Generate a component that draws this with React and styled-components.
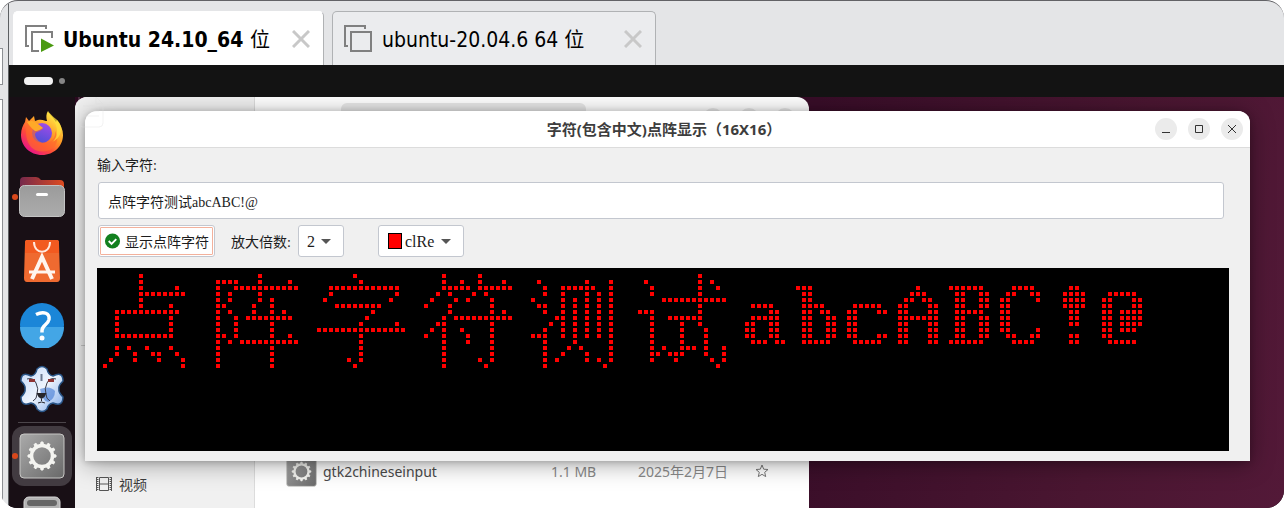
import React from "react";
import styled, { createGlobalStyle, css } from "styled-components";

const GlobalStyle = createGlobalStyle`
  * { box-sizing: border-box; }
  html, body { margin: 0; background: #fff; }
  button, input, select { margin: 0; font: inherit; color: inherit; }
`;

const uiFont = `"Noto Sans", "Noto Sans CJK SC", sans-serif`;
const tabFont = `"DejaVu Sans Condensed", "Noto Sans CJK SC", sans-serif`;
const formFont = `"Liberation Serif", "Noto Sans CJK SC", serif`;

const Screen = styled.div`
  display: flex;
  min-height: 100vh;
  overflow: hidden;
  border-radius: 18px;
  background: #e4e5e7;
  border-top: 1px solid #626266;
`;

const Edge = styled.div`
  display: flex;
  flex-direction: column;
  gap: 14px;
  width: 9px;
  padding-top: 47px;
  border-right: 1px solid #5d6063;
  flex: none;
`;

const EdgePane = styled.div`
  width: 3px;
  height: ${(p) => (p.$tall ? "auto" : "37px")};
  flex: ${(p) => (p.$tall ? "1" : "none")};
  background: #fff;
  border: 1px solid #8d9094;
  border-left: 0;
`;

const Machine = styled.main`
  display: flex;
  flex-direction: column;
  flex: 1;
  min-width: 0;
`;

const TabBar = styled.nav`
  display: flex;
  gap: 8px;
  padding: 10px 4px 0;
`;

const Tab = styled.div`
  display: flex;
  align-items: center;
  width: ${(p) => (p.$active ? 311 : 324)}px;
  height: 54px;
  padding: 0 13px 0 10px;
  border: 1px solid ${(p) => (p.$active ? "#fff" : "#b0b2b4")};
  border-right-color: #b0b2b4;
  border-bottom: 0;
  border-radius: 5px 5px 0 0;
  background: ${(p) => (p.$active ? "#fff" : "#ebecee")};
`;

const TabLabel = styled.button`
  display: flex;
  align-items: center;
  gap: 8px;
  flex: 1;
  padding: 0;
  border: 0;
  background: none;
  color: #000;
  font-family: ${tabFont};
  font-size: 21px;
  font-weight: ${(p) => (p.$active ? 700 : 400)};
  white-space: nowrap;
`;

const Hanzi = styled.span`
  font-weight: 400;
  font-size: 20px;
`;

const CloseTab = styled.button`
  display: grid;
  width: 18px;
  height: 18px;
  padding: 0;
  border: 0;
  background: none;
`;

const TopBar = styled.header`
  display: flex;
  align-items: center;
  gap: 6px;
  height: 32px;
  padding-left: 15px;
  background: #131313;
`;

const Pill = styled.span`
  width: ${(p) => (p.$current ? 29 : 6)}px;
  height: ${(p) => (p.$current ? 8 : 6)}px;
  border-radius: 4px;
  background: ${(p) => (p.$current ? "#f2f2f2" : "#858585")};
`;

const Desktop = styled.div`
  display: flex;
  flex: 1;
  background: #180f15;
`;

const Dock = styled.aside`
  display: flex;
  flex-direction: column;
  align-items: center;
  width: 66px;
  height: 411px;
  padding-top: 4px;
  overflow: hidden;
  flex: none;
  background: #180f15;
`;

const DockItem = styled.button`
  display: grid;
  place-items: center;
  position: relative;
  flex: none;
  width: 60px;
  height: ${(p) => (p.$active ? 60 : 64)}px;
  padding: 0;
  border: 0;
  border-radius: 12px;
  background: ${(p) => (p.$active ? "#423b41" : "none")};
  ${(p) =>
    p.$running &&
    css`
      &::before {
        content: "";
        position: absolute;
        left: 0;
        width: 6px;
        height: 6px;
        border-radius: 50%;
        background: #d9481c;
      }
    `}
`;

const DockRule = styled.hr`
  flex: none;
  width: 48px;
  height: 1px;
  margin: 1px 0 3px;
  border: 0;
  background: #4b454a;
`;

const Workspace = styled.section`
  position: relative;
  flex: 1;
  min-width: 0;
  overflow: hidden;
  background: linear-gradient(100deg, #2c0a20 0%, #380d28 58%, #4a1631 84%, #531938 100%);
`;

const FilesWindow = styled.section`
  display: flex;
  position: absolute;
  inset: 0 auto 0 0;
  width: 734px;
  overflow: hidden;
  border-radius: 12px 12px 0 0;
  background: #fff;
  font-family: ${uiFont};
  font-size: 14px;
  color: #3d3d3d;
`;

const Sidebar = styled.div`
  display: flex;
  flex-direction: column;
  width: 180px;
  padding: 248px 6px 0;
  background: #f0f0f0;
  border-right: 1px solid #dcdcdc;
`;

const SidebarRule = styled.hr`
  width: 100%;
  height: 1px;
  margin: 0;
  border: 0;
  background: #c9c9c9;
`;

const Place = styled.a`
  display: flex;
  align-items: center;
  gap: 7px;
  margin-top: 120px;
  padding-left: 15px;
  height: 36px;
  color: inherit;
  text-decoration: none;
`;

const FilesMain = styled.div`
  flex: 1;
`;

const FilesHeader = styled.div`
  display: flex;
  align-items: flex-start;
  justify-content: space-between;
  height: 46px;
  padding: 6px 14px 0 86px;
`;

const PathBar = styled.div`
  width: 245px;
  height: 34px;
  border-radius: 6px;
  background: #e8e8e8;
`;

const FilesControls = styled.div`
  display: flex;
  gap: 16px;
  padding-top: 5px;
`;

const ControlDot = styled.span`
  width: 20px;
  height: 20px;
  border-radius: 50%;
  background: #e8e8e8;
`;

const FileRow = styled.div`
  display: grid;
  grid-template-columns: 30px 235px 87px 117px 16px;
  align-items: center;
  height: 36px;
  margin-top: 310px;
  padding-left: 31px;
  color: #8a8a8a;
`;

const FileName = styled.span`
  padding-left: 7px;
  color: #4a4a4a;
`;

const FileMeta = styled.span`
  white-space: nowrap;
`;

const Ghost = styled.svg`
  position: absolute;
  left: 3px;
  top: 0;
  opacity: 0.35;
`;

const Dialog = styled.section`
  position: absolute;
  inset: 14px 34px auto 10px;
  border-radius: 12px 12px 0 0;
  background: #f0f0f0;
  box-shadow: 0 3px 24px rgba(0, 0, 0, 0.36), 0 1px 6px rgba(0, 0, 0, 0.2);
  font-family: ${formFont};
  font-size: 14px;
  color: #1c1c1c;
`;

const TitleBar = styled.header`
  display: grid;
  grid-template-columns: 1fr auto 1fr;
  align-items: center;
  height: 37px;
  padding-right: 7px;
  border-bottom: 1px solid #dcdcdc;
  border-radius: 12px 12px 0 0;
  background: #fff;
`;

const Title = styled.h1`
  grid-column: 2;
  margin: 0;
  font: 700 15px/20px ${uiFont};
  color: #3d3d3d;
  white-space: nowrap;
`;

const WindowControls = styled.div`
  display: flex;
  justify-content: flex-end;
  gap: 11px;
`;

const WindowButton = styled.button`
  display: grid;
  place-items: center;
  width: 22px;
  height: 22px;
  padding: 0;
  border: 0;
  border-radius: 50%;
  background: #ebebeb;
`;

const Form = styled.form`
  padding: 2px 21px 10px 12px;
`;

const FieldLabel = styled.label`
  display: block;
  line-height: 32px;
`;

const control = css`
  height: 32px;
  border: 1px solid #c3c7cf;
  border-radius: 3px;
  background: #fff;
`;

const TextInput = styled.input`
  ${control}
  display: block;
  width: calc(100% - 6px);
  height: 37px;
  margin: 0 5px 6px 1px;
  padding: 0 9px;
`;

const Controls = styled.div`
  display: flex;
  align-items: center;
  padding-left: 1px;
  margin-bottom: 11px;
`;

const ShowButton = styled.button`
  ${control}
  display: flex;
  align-items: center;
  gap: 4px;
  width: 117px;
  padding: 0 5px;
  outline: 1px solid #f3b19c;
  outline-offset: -3px;
  white-space: nowrap;
`;

const ZoomLabel = styled.label`
  width: 67px;
  margin-left: 16px;
`;

const Picker = styled.div`
  display: grid;
  position: relative;
  align-items: center;
  width: ${(p) => p.$width}px;
  margin-right: 34px;
`;

const Select = styled.select`
  ${control}
  width: 100%;
  padding: 0 0 0 ${(p) => (p.$swatch ? 26 : 8)}px;
  appearance: none;
  font-size: 16px;
`;

const Swatch = styled.span`
  position: absolute;
  left: 10px;
  width: 14px;
  height: 16px;
  border: 1px solid #000;
  background: #f00;
  pointer-events: none;
`;

const Arrow = styled.span`
  position: absolute;
  right: 13px;
  border: 5px solid transparent;
  border-top-color: #555;
  border-bottom: 0;
  pointer-events: none;
`;

const Matrix = styled.div`
  height: 183px;
  padding: 6px;
  overflow: hidden;
  background: #000;
`;

/* Lit columns of every row in a 16-row glyph; "a-b" is a run of dots. */
const glyphs = [
  { wide: true, rows: ["6", "6", "6 12", "6-13", "6", "6 11", "2-12", "2 11", "2 11", "2 11", "2-11", "", "2 4 7 11", "2 5 8 9 12", "1 5 9 13", "0 13"] },
  { wide: true, rows: ["8", "1-4 8 13", "1 4-14", "1 3 8", "1 3 8 10", "1 2 7 10", "1 3 7 10 12", "1 4 6-13", "1 4 10", "1 4 10", "1 2 4 10 13", "1 3 5-14", "1 10", "1 10", "1 10", "1 10"] },
  { wide: true, rows: ["6", "7", "2-13", "2 13", "1 12", "3-10", "9", "8", "7 13", "0-14", "7", "7", "7", "7", "5 7", "6"] },
  { wide: true, rows: ["3 9", "3 6 9 13", "3-7 9-14", "2 4 8 10", "1 5 7 11", "0 4 11", "4 11 13", "3 5-14", "2 3 11", "1 3 6 11", "0 3 7 11", "3 7 11", "3 11", "3 11", "3 9 11", "3 10"] },
  { wide: true, rows: ["", "1 9 13", "2 5-10 13", "2 5 9 11 13", "0 5 7 9 11 13", "1 2 5 7 9 11 13", "2 5 7 9 11 13", "4 5 7 9 11 13", "3 5 7 9 11 13", "2 5 7 9 11 13", "0-2 5 7 9 11 13", "2 7 13", "2 6 8 13", "2 5 9 13", "2 4 9 11 13", "2 12"] },
  { wide: true, rows: ["10", "1 10 12", "2 10 13", "2 10", "4-14", "10", "0-2 10", "2 5-10", "2 7 10", "2 7 11", "2 7 11", "2 7 11", "2 4 7-9 11 14", "2 3 5-7 11 14", "2 6 12 14", "13"] },
  { rows: ["", "", "", "", "", "1-4", "4 5", "1-5", "0 1 4 5", "0 1 4 5", "0 1 4 5", "1-3 5 6"] },
  { rows: ["", "", "0-2", "1 2", "1 2", "1-4", "1 2 4 5", "1 2 5 6", "1 2 5 6", "1 2 5 6", "1 2 5 6", "1-5"] },
  { rows: ["", "", "", "", "", "1-5", "0 1 5 6", "0 1", "0 1", "0 1", "0 1 5 6", "1-5"] },
  { rows: ["", "", "3", "2-4", "1 2 4 5", "0 1 5 6", "0 1 5 6", "0-6", "0 1 5 6", "0 1 5 6", "0 1 5 6", "0 1 5 6"] },
  { rows: ["", "", "0-5", "1 2 5 6", "1 2 5 6", "1 2 5 6", "1-5", "1 2 5 6", "1 2 5 6", "1 2 5 6", "1 2 5 6", "0-5"] },
  { rows: ["", "", "2-5", "1 2 5 6", "0 1 6", "0 1", "0 1", "0 1", "0 1", "0 1 6", "1 2 5 6", "2-5"] },
  { rows: ["", "", "3 4", "2-5", "2-5", "2-5", "3 4", "3 4", "3 4", "", "3 4", "3 4"] },
  { rows: ["", "", "", "1-5", "0 1 5 6", "0 1 5 6", "0 1 3-6", "0 1 3-6", "0 1 3-6", "0 1 3-5", "0 1", "1-5"] },
];

const litColumns = (row) =>
  row
    .split(" ")
    .filter(Boolean)
    .flatMap((part) => {
      const [from, to = from] = part.split("-").map(Number);
      return Array.from({ length: to - from + 1 }, (_, i) => from + i);
    });

function DotMatrix() {
  let origin = 0;
  const dots = [];
  glyphs.forEach((glyph, g) => {
    glyph.rows.forEach((row, r) =>
      litColumns(row).forEach((c) =>
        dots.push(<rect key={`${g}-${r}-${c}`} x={origin + c * 6} y={r * 6} width="4" height="4" />)
      )
    );
    origin += glyph.wide ? 107 : 51;
  });
  return (
    <Matrix>
      <svg width="1050" height="100" fill="#f00" shapeRendering="crispEdges" role="img" aria-label="点阵">
        {dots}
      </svg>
    </Matrix>
  );
}

const MachineIcon = ({ running }) => (
  <svg width="31" height="29" fill="none" stroke="#808080" strokeWidth="2">
    <path d="M22 5V2H2v20h3" />
    {running ? <path d="M15 27H8V8h20v6" /> : <path d="M8 8h20v19H8z" />}
    {running && <path d="M17 14.500L30 21.500L17 28z" fill="#4a9a10" stroke="none" />}
  </svg>
);

const Cross = () => (
  <svg width="18" height="18" stroke="#c8c8c8" strokeWidth="3">
    <path d="M1 1l16 16M17 1L1 17" />
  </svg>
);

const Firefox = () => (
  <svg width="44" height="44" viewBox="0 0 44 44">
    <defs>
      <linearGradient id="fox" x1=".85" y1=".1" x2=".2" y2=".95">
        <stop offset="0" stopColor="#fff04a" />
        <stop offset=".4" stopColor="#ff9a25" />
        <stop offset=".7" stopColor="#ff4a39" />
        <stop offset="1" stopColor="#e8128c" />
      </linearGradient>
      <linearGradient id="globe" x1=".7" y1="0" x2=".3" y2="1">
        <stop offset="0" stopColor="#a14be8" />
        <stop offset="1" stopColor="#4b4fd6" />
      </linearGradient>
    </defs>
    <path d="M28 0c1 3 5 6 8 11l1-2c4 5 6 10 6 15 0 11-9 20-21 20S1 35 1 24c0-6 2-10 4-13l1-5 3 4 5-5 1 5c6-3 10 0 12 0-1-4-1-7 1-10z" fill="url(#fox)" />
    <circle cx="22" cy="22" r="10" fill="url(#globe)" />
    <path d="M7 12c4-2 8-2 11 1l5 4c-2 4-7 3-8 6 0 5 5 9 10 9 7 0 11-6 10-12 3 5 3 12-1 16-6 6-17 6-23 0-5-6-6-15-4-24z" fill="#ff6a2b" opacity=".65" />
    <path d="M7 11c4-2 9-1 11 2l5 4c-3 1-4 3-8 3-4-3-6-6-8-9z" fill="#ffa928" />
    <path d="M28 0c1 5 9 10 9 20 0 5-2 9-5 11 8-3 11-12 8-18-2-5-8-7-12-13z" fill="#ffdf3c" opacity=".75" />
  </svg>
);

const Folder = () => (
  <svg width="46" height="42" viewBox="0 0 46 42">
    <defs>
      <linearGradient id="tab" x1="0" x2="1">
        <stop offset="0" stopColor="#76294c" />
        <stop offset="1" stopColor="#de4b20" />
      </linearGradient>
      <linearGradient id="steel" x1="0" y1="0" x2="0" y2="1">
        <stop offset="0" stopColor="#9b9b9b" />
        <stop offset="1" stopColor="#acacac" />
      </linearGradient>
    </defs>
    <path d="M1 14V5q0-4 4-4h12q3 0 5 3h19q4 0 4 4v12H1z" fill="url(#tab)" />
    <rect x=".5" y="9.500" width="45" height="31" rx="5" fill="url(#steel)" stroke="#c3c3c3" />
    <rect x="17" y="17" width="12" height="3" rx="1.500" fill="#fff" />
  </svg>
);

const Software = () => (
  <svg width="38" height="44" viewBox="0 0 38 44" fill="none">
    <path d="M4 1h30q2 0 2 3l1 35q0 4-3 4H4q-3 0-3-4L2 4q0-3 2-3z" fill="#ef6a30" />
    <path d="M4 1h30q2 0 2 3v10H2V4q0-3 2-3z" fill="#f25a20" />
    <path d="M11 3c0 13 16 13 16 0" stroke="#ffe9df" strokeWidth="2" />
    <path d="M9 40l10-22 10 22" stroke="#fff5ef" strokeWidth="4" />
    <path d="M6 33h26" stroke="#fff5ef" strokeWidth="3" />
  </svg>
);

const Help = () => (
  <svg width="46" height="46" viewBox="0 0 46 46" fill="none">
    <circle cx="23" cy="23" r="22" fill="#1b86d8" />
    <path d="M1 25a22 22 0 0 0 44 0z" fill="#43a6e6" />
    <path d="M17 12.500c8-4 14-1 13 5-1 5-7 6-7 11v2" stroke="#fff" strokeWidth="3.500" />
    <circle cx="23" cy="36" r="2.500" fill="#fff" />
  </svg>
);

const Lazarus = () => (
  <svg width="46" height="48" viewBox="0 0 46 48" fill="none">
    <defs>
      <linearGradient id="ice" x1="0" y1="0" x2="1" y2="1">
        <stop offset="0" stopColor="#c3d8f8" />
        <stop offset=".5" stopColor="#eef4fd" />
        <stop offset="1" stopColor="#7da8e8" />
      </linearGradient>
    </defs>
    <path d="M18 4q5-5 10 0 1 6 6 7 10-5 10 5-5 5-4 8-1 3 4 8 0 10-10 6-5 1-6 6-5 5-10 0-1-5-6-6-10 4-10-6 5-5 4-8 1-3-4-8 0-10 10-5 5-1 6-7z" fill="url(#ice)" stroke="#2a5587" strokeWidth="1.500" />
    <path d="M21 24q10-4 15 2 0 8-7 11-6-1-8-13z" fill="#3f78d4" opacity=".6" />
    <path d="M8 14q6-2 9 4 3 6 1 11 0 5-4 7" stroke="#3a3e4c" />
    <path d="M37 14q-6-2-9 4-3 6-1 11 0 5 4 7" stroke="#3a3e4c" />
    <path d="M22.500 9v7" stroke="#6d7a92" strokeWidth="2" />
    <path d="M10 15.500h6M29 15.500h6" stroke="#8e3434" strokeWidth="3" />
    <path d="M17.500 28h10l-2 4-3 2-3-2z" fill="#26262b" />
    <path d="M22.500 34v2M19 38q3.500-2 7 0" stroke="#26262b" />
  </svg>
);

const teeth = Array.from({ length: 12 }, (_, i) => i * 30);

const GearTile = ({ size }) => (
  <svg width={size} height={size} viewBox="0 0 46 46" fill="none">
    <defs>
      <linearGradient id={`tile${size}`} x1="0" y1="0" x2="1" y2="1">
        <stop offset="0" stopColor="#aaa" />
        <stop offset="1" stopColor="#696969" />
      </linearGradient>
    </defs>
    <rect x="1" y="1" width="44" height="44" rx="4" fill={`url(#tile${size})`} stroke="#c6c6c4" />
    <circle cx="23" cy="23" r="10.500" stroke="#f4f4f0" strokeWidth="3.500" />
    {teeth.map((a) => (
      <path key={a} d="M21.500 12l.5-3h2l.5 3z" fill="#f4f4f0" stroke="#f4f4f0" transform={`rotate(${a} 23 23)`} />
    ))}
  </svg>
);

const Drive = () => (
  <svg width="38" height="44" viewBox="0 0 38 44" fill="none">
    <rect x="1" y="1" width="36" height="42" rx="5" fill="#b3b3b3" stroke="#d5d5d5" />
    <rect x="4" y="4" width="30" height="6" rx="3" fill="#666" />
  </svg>
);

const Film = () => (
  <svg width="16" height="14" stroke="#555" fill="none">
    <path d="M3.500 .5h9v13h-9zM3.500 7h9" />
    <path d="M1.500 0v14M14.500 0v14" strokeWidth="2" strokeDasharray="1 1" />
    <path d="M.5 0v14M15.500 0v14" />
  </svg>
);

const Star = () => (
  <svg width="14" height="14" viewBox="0 0 14 14" fill="none" stroke="#777">
    <path d="M7 1l1.700 4.200 4.300.3-3.300 2.800 1 4.300L7 10.300l-3.700 2.300 1-4.300L1 5.500l4.300-.3z" />
  </svg>
);

const Check = () => (
  <svg width="18" height="18" viewBox="0 0 18 18" fill="none">
    <circle cx="9" cy="9" r="8" fill="#12801f" />
    <path d="M5 9l3 3 5-5" stroke="#fff" strokeWidth="2" />
  </svg>
);

const controlShapes = {
  最小化: "M1 8.500h8",
  最大化: "M1.500 1.500h7v7h-7z",
  关闭: "M1 1l8 8M9 1L1 9",
};

export default function App() {
  return (
    <>
      <GlobalStyle />
      <Screen>
        <Edge>
          <EdgePane />
          <EdgePane $tall />
        </Edge>
        <Machine>
          <TabBar>
            <Tab $active>
              <TabLabel type="button" $active>
                <MachineIcon running />
                <span>Ubuntu 24.10_64 <Hanzi>位</Hanzi></span>
              </TabLabel>
              <CloseTab type="button" aria-label="关闭"><Cross /></CloseTab>
            </Tab>
            <Tab>
              <TabLabel type="button">
                <MachineIcon />
                <span>ubuntu-20.04.6 64 <Hanzi>位</Hanzi></span>
              </TabLabel>
              <CloseTab type="button" aria-label="关闭"><Cross /></CloseTab>
            </Tab>
          </TabBar>
          <TopBar>
            <Pill $current />
            <Pill />
          </TopBar>
          <Desktop>
            <Dock>
              <DockItem type="button" aria-label="Firefox"><Firefox /></DockItem>
              <DockItem type="button" $running aria-label="文件"><Folder /></DockItem>
              <DockItem type="button" aria-label="软件"><Software /></DockItem>
              <DockItem type="button" aria-label="帮助"><Help /></DockItem>
              <DockItem type="button" aria-label="Lazarus"><Lazarus /></DockItem>
              <DockRule />
              <DockItem type="button" $active $running aria-label="应用"><GearTile size={46} /></DockItem>
              <DockItem type="button" aria-label="磁盘"><Drive /></DockItem>
            </Dock>
            <Workspace>
              <FilesWindow>
                <Sidebar>
                  <SidebarRule />
                  <Place href="#videos"><Film />视频</Place>
                </Sidebar>
                <FilesMain>
                  <FilesHeader>
                    <PathBar />
                    <FilesControls>
                      <ControlDot />
                      <ControlDot />
                      <ControlDot />
                    </FilesControls>
                  </FilesHeader>
                  <FileRow>
                    <GearTile size={31} />
                    <FileName>gtk2chineseinput</FileName>
                    <FileMeta>1.1 MB</FileMeta>
                    <FileMeta>2025年2月7日</FileMeta>
                    <Star />
                  </FileRow>
                </FilesMain>
              </FilesWindow>
              <Dialog>
                <TitleBar>
                  <Title>字符(包含中文)点阵显示（16X16）</Title>
                  <WindowControls>
                    {Object.entries(controlShapes).map(([name, shape]) => (
                      <WindowButton type="button" key={name} aria-label={name}>
                        <svg width="10" height="10" fill="none" stroke="#333"><path d={shape} /></svg>
                      </WindowButton>
                    ))}
                  </WindowControls>
                </TitleBar>
                <Form onSubmit={(e) => e.preventDefault()}>
                  <FieldLabel htmlFor="chars">输入字符:</FieldLabel>
                  <TextInput id="chars" defaultValue="点阵字符测试abcABC!@" />
                  <Controls>
                    <ShowButton><Check />显示点阵字符</ShowButton>
                    <ZoomLabel htmlFor="zoom">放大倍数:</ZoomLabel>
                    <Picker $width={46}>
                      <Select id="zoom"><option>2</option></Select>
                      <Arrow />
                    </Picker>
                    <Picker $width={86}>
                      <Select $swatch aria-label="颜色"><option>clRe</option></Select>
                      <Swatch />
                      <Arrow />
                    </Picker>
                  </Controls>
                  <DotMatrix />
                </Form>
              </Dialog>
              <Ghost width="26" height="31" fill="none" stroke="#ddd">
                <path d="M1 0v26q0 4 4 4h16q4 0 4-4V7l-7-7M18 0v7h7M5 9h14M5 14h16M5 19h16" />
              </Ghost>
            </Workspace>
          </Desktop>
        </Machine>
      </Screen>
    </>
  );
}
